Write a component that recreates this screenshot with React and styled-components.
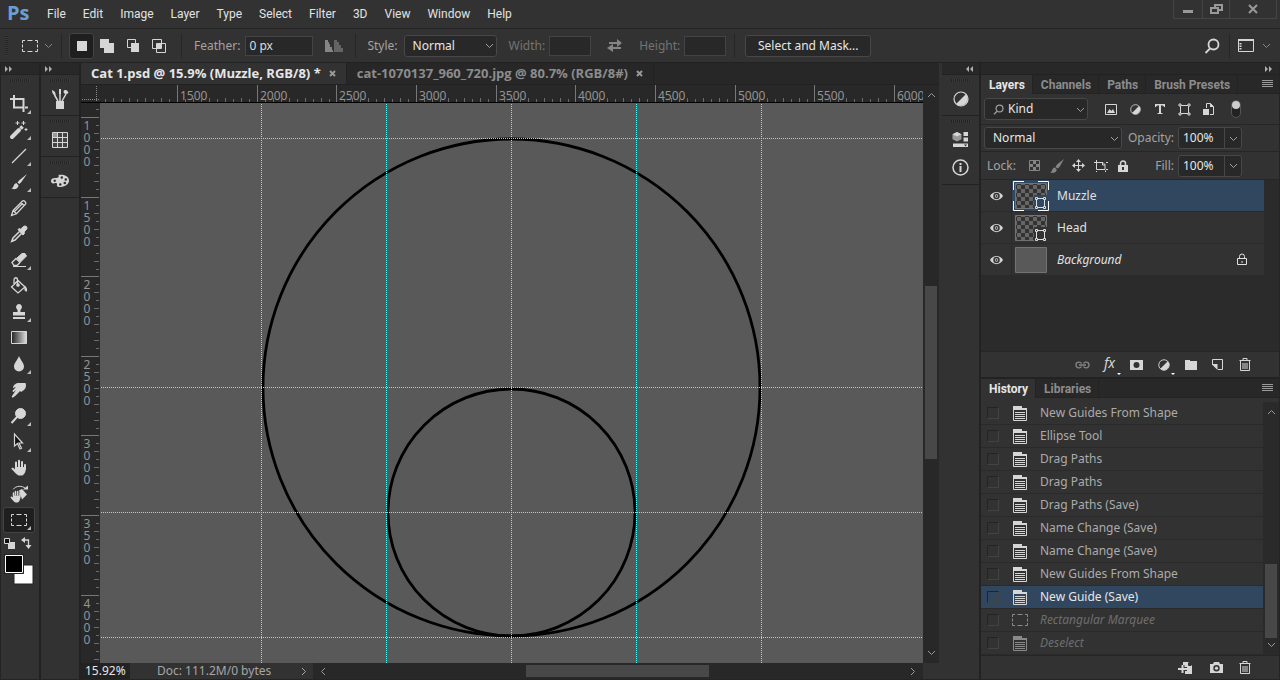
import { Fragment, useLayoutEffect, useRef, useState } from 'react'
import styled, { createGlobalStyle, css } from 'styled-components'

const GlobalStyle = createGlobalStyle`
  * { box-sizing: border-box; }
  body {
    margin: 0;
    background: #222;
    color: #ddd;
    font: 12px/16px "Noto Sans", "Open Sans", sans-serif;
  }
  button, input, select { font: inherit; color: inherit; }
  button { background: none; border: 0; padding: 0; }
  svg { display: block; flex: none; }
  ul { list-style: none; margin: 0; padding: 0; }
`

const panel = '#323232'
const dark = '#282828'
const line = '#242424'
const light = '#d6d6d6'

const Page = styled.div`
  display: flex;
  flex-direction: column;
  height: 100vh;
  min-height: 640px;
  overflow: hidden;
`

/* ---------- menu ---------- */

const MenuBar = styled.header`
  display: flex;
  align-items: flex-start;
  height: 29px;
  flex: none;
  background: ${panel};
  border-bottom: 1px solid ${line};
  padding-left: 7px;
`
const Brand = styled.div`
  width: 40px;
  font: bold 20px/25px "Open Sans", sans-serif;
  color: #6b9fd1;
`
const Menu = styled.nav`
  display: flex;
  gap: 17px;
  flex: 1;
`
const MenuItem = styled.button`
  font: 12px/28px Roboto, "Noto Sans", sans-serif;
  color: #e2e2e2;
`
const WindowButtons = styled.div`
  display: flex;
  height: 19px;
  margin-right: 3px;
  border: 1px solid #444;
  border-top: 0;
`
const WindowButton = styled.button`
  width: ${p => p.$w}px;
  display: flex;
  align-items: center;
  justify-content: center;
  color: #999;
  & + & { border-left: 1px solid #444; }
`

/* ---------- options bar ---------- */

const OptionsBar = styled.div`
  display: flex;
  align-items: center;
  height: 33px;
  flex: none;
  background: ${panel};
  padding: 0 2px 0 5px;
`
const Divider = styled.span`
  width: 1px;
  height: 24px;
  background: #262626;
  margin: 0 ${p => p.$r}px 0 ${p => p.$l}px;
`
const GripV = styled.span`
  width: 3px;
  height: 20px;
  margin-right: 13px;
  background: repeating-linear-gradient(#242424 0 1px, #3a3a3a 1px 2px);
`
const Label = styled.label`
  color: ${p => (p.$off ? '#737373' : '#a3a3a3')};
  margin-right: ${p => p.$gap || 5}px;
  margin-left: ${p => p.$before || 0}px;
  white-space: nowrap;
`
const TextBox = styled.input`
  width: ${p => p.$w}px;
  height: 20px;
  padding: 0 3px;
  background: ${dark};
  border: 1px solid #434343;
  outline: 0;
`
const IconButton = styled.button`
  display: flex;
  align-items: center;
  justify-content: center;
  width: ${p => p.$w || 26}px;
  height: ${p => p.$h || 26}px;
  flex: none;
  color: ${p => (p.$dim ? '#858585' : light)};
  ${p => p.$on && css`
    background: #1f1f1f;
    border: 1px solid #444;
    border-radius: 3px;
  `}
`
const SelectBox = styled.span`
  display: flex;
  align-items: center;
  gap: 4px;
  width: ${p => p.$w}px;
  height: 22px;
  padding: 0 2px 0 8px;
  background: ${dark};
  border: 1px solid #474747;
  border-radius: 3px;
  color: #a0a0a0;
  select {
    appearance: none;
    flex: 1;
    min-width: 0;
    padding: 0;
    background: none;
    border: 0;
    outline: 0;
    color: #e6e6e6;
  }
`
const MaskButton = styled.button`
  width: 126px;
  height: 22px;
  background: ${dark};
  border: 1px solid #474747;
  border-radius: 3px;
  color: #e6e6e6;
`
const Spacer = styled.span`
  flex: 1;
`

/* ---------- workspace ---------- */

const Workspace = styled.div`
  display: flex;
  flex: 1;
  min-height: 0;
  border: 1px solid ${line};
  border-top-color: #222;
`
const Column = styled.aside`
  display: flex;
  flex-direction: column;
  flex: none;
  width: ${p => p.$w}px;
  background: ${panel};
  border-right: ${p => p.$edge || 0}px solid #222;
`
const Collapse = styled.button`
  display: flex;
  align-items: center;
  justify-content: ${p => (p.$right ? 'flex-end' : 'flex-start')};
  height: 12px;
  flex: none;
  padding: 0 6px 0 4px;
  background: ${dark};
  border-bottom: 1px solid #222;
  color: #b0b0b0;
`
const GripH = styled.span`
  display: block;
  width: 20px;
  height: 3px;
  margin: 4px auto 0 9px;
  background: repeating-linear-gradient(90deg, #242424 0 1px, #3a3a3a 1px 2px);
`
const Tools = styled.div`
  display: flex;
  flex-direction: column;
  padding: 9px 3px 0 2px;
`
const Tool = styled.button`
  display: flex;
  align-items: center;
  justify-content: center;
  position: relative;
  width: 32px;
  height: 26px;
  color: ${light};
  border: 1px solid ${p => (p.$on ? '#444' : 'transparent')};
  border-radius: 3px;
  background: ${p => (p.$on ? '#1f1f1f' : 'none')};
  ${p => p.$more && css`
    &::after {
      content: '';
      position: absolute;
      right: 3px;
      bottom: 2px;
      border: 2px solid;
      border-color: transparent #bbb #bbb transparent;
    }
  `}
`
const ToolFoot = styled.div`
  display: flex;
  justify-content: space-between;
  padding: 3px 3px 4px 1px;
`
const PanelGroup = styled.div`
  display: flex;
  flex-direction: column;
  border-bottom: 1px solid #222;
  padding-bottom: ${p => p.$pb || 3}px;
  ${GripH} { margin-bottom: 4px; }
`
const DocArea = styled.main`
  display: flex;
  flex-direction: column;
  flex: 1;
  min-width: 0;
  background: ${dark};
`
const DocTabs = styled.div`
  display: flex;
  height: 22px;
  flex: none;
  background: #272727;
  border-bottom: 1px solid #222;
`
const DocTab = styled.button`
  display: flex;
  align-items: center;
  gap: 8px;
  padding: 0 10px;
  border-right: 1px solid #222;
  font: bold 13px/21px "Open Sans", sans-serif;
  white-space: nowrap;
  color: ${p => (p.$on ? '#e6e6e6' : '#8c8c8c')};
  background: ${p => (p.$on ? panel : 'none')};
  svg { color: #999; }
`
const Sheet = styled.div`
  display: grid;
  grid-template-columns: 19px 1fr 16px;
  grid-template-rows: 18px 1fr;
  flex: 1;
  min-height: 0;
`
const Clip = styled.div`
  overflow: hidden;
  min-width: 0;
  min-height: 0;
  background: ${p => p.$bg || dark};
  border-bottom: ${p => (p.$rule ? '1px solid #000' : '0')};
`
const VScroll = styled.div`
  display: flex;
  flex-direction: column;
  align-items: center;
  grid-column: 3;
  grid-row: 1 / 3;
  padding: 6px 0;
  background: ${dark};
  color: #999;
`
const Thumb = styled.span`
  display: block;
  background: #484848;
  width: ${p => p.$w}px;
  height: ${p => p.$h}px;
`
const VTrack = styled.span`
  flex: 1;
  padding-top: 186px;
`
const HTrack = styled.span`
  flex: 1;
  padding-left: 198px;
`
const Status = styled.footer`
  display: flex;
  align-items: center;
  height: 16px;
  flex: none;
  background: ${panel};
  color: #a6a6a6;
`
const Zoom = styled.input`
  width: 49px;
  height: 16px;
  padding: 0 0 0 4px;
  background: #222;
  border: 0;
  outline: 0;
  color: #e6e6e6;
`
const DocInfo = styled.button`
  display: flex;
  align-items: center;
  justify-content: space-between;
  width: 183px;
  height: 16px;
  padding: 0 5px 0 27px;
  background: ${panel};
  color: #a6a6a6;
`
const HScroll = styled.div`
  display: flex;
  align-items: center;
  flex: 1;
  height: 16px;
  margin-right: 16px;
  padding: 0 6px;
  background: ${dark};
  color: #999;
`

/* ---------- panels ---------- */

const Tabs = styled.div`
  display: flex;
  height: 19px;
  flex: none;
  background: ${dark};
  border-bottom: 1px solid #242424;
  padding-right: 6px;
`
const Tab = styled.button`
  padding: 0 7px 0 8px;
  height: 19px;
  border-right: 1px solid #222;
  font: bold 12px/20px Roboto, "Open Sans", sans-serif;
  color: ${p => (p.$on ? '#e6e6e6' : '#8c8c8c')};
  background: ${p => (p.$on ? panel : 'none')};
`
const PanelMenu = styled.button`
  display: flex;
  align-items: center;
  color: #9a9a9a;
`
const Row = styled.div`
  display: flex;
  align-items: center;
  height: ${p => p.$h || 27}px;
  flex: none;
  padding: 0 37px 0 3px;
  border-bottom: 1px solid #262626;
`
const Combo = styled.span`
  display: flex;
  width: 64px;
  height: 22px;
  background: ${dark};
  border: 1px solid #474747;
  border-radius: 3px;
  input {
    width: 46px;
    padding: 0 0 0 4px;
    background: none;
    border: 0;
    border-right: 1px solid #474747;
    outline: 0;
    color: #e6e6e6;
  }
  button {
    flex: 1;
    display: flex;
    align-items: center;
    justify-content: center;
    color: #a0a0a0;
  }
`
const LayersPanel = styled.section`
  display: flex;
  flex-direction: column;
  flex: 1;
  min-height: 0;
  border-bottom: 2px solid #222;
`
const LayerList = styled.ul`
  flex: 1;
  min-height: 0;
  padding-right: 15px;
  background: #2b2b2b;
`
const Layer = styled.li`
  display: flex;
  height: 32px;
  border-bottom: 1px solid #2a2a2a;
  background: ${panel};
`
const Eye = styled.button`
  display: flex;
  align-items: center;
  justify-content: center;
  width: 31px;
  border-right: 1px solid #2a2a2a;
`
const LayerBody = styled.div`
  display: flex;
  align-items: center;
  flex: 1;
  gap: 8px;
  padding: 0 16px 0 1px;
  background: ${p => (p.$on ? '#30475f' : 'none')};
  color: #e0e0e0;
`
const LayerName = styled.span`
  flex: 1;
  line-height: 18px;
  font-style: ${p => (p.$italic ? 'italic' : 'normal')};
`
const PanelFoot = styled.div`
  display: flex;
  align-items: center;
  justify-content: flex-end;
  height: ${p => p.$h || 26}px;
  flex: none;
  padding-right: 21px;
  border-top: 1px solid #262626;
`
const HistoryPanel = styled.section`
  display: flex;
  flex-direction: column;
  flex: none;
`
const HistoryBody = styled.div`
  display: flex;
  margin-top: 4px;
`
const HistoryList = styled.ul`
  flex: 1;
`
const HistoryItem = styled.li`
  height: 23px;
  border-bottom: 1px solid #2a2a2a;
  background: ${p => (p.$on ? '#30475f' : 'none')};
  label {
    display: flex;
    align-items: center;
    height: 22px;
    padding-left: 6px;
    color: ${p => (p.$on ? '#e6e6e6' : p.$undone ? '#6e6e6e' : '#ababab')};
    font-style: ${p => (p.$undone ? 'italic' : 'normal')};
  }
`
const Check = styled.input`
  appearance: none;
  width: 12px;
  height: 12px;
  margin: 0;
  border: 1px solid;
  border-color: #242424 #434343 #434343 #242424;
`
const StateIcon = styled.span`
  display: flex;
  justify-content: center;
  width: 20px;
  margin: 0 10px 0 11px;
  color: ${p => (p.$undone ? '#8a8a8a' : light)};
`
const ListScroll = styled.div`
  display: flex;
  flex-direction: column;
  align-items: center;
  width: 16px;
  padding: 6px 0;
  background: #2a2a2a;
  color: #999;
  ${Thumb} { margin: auto 0 2px; }
`

/* ---------- icons ---------- */

const Svg = ({ w = 20, h = 20, children, ...rest }) => (
  <svg width={w} height={h} viewBox={`0 0 ${w} ${h}`} fill="none" stroke="currentColor" aria-hidden="true" {...rest}>
    {children}
  </svg>
)
const Fill = props => <Svg fill="currentColor" {...props} stroke="none" />

const Chevron = ({ turn = 0 }) => (
  <Svg w={9} h={9}><path d="M1 3l3.5 3.5L8 3" transform={`rotate(${turn} 4.5 4.5)`} /></Svg>
)
const Arrows = ({ left }) => (
  <Fill w={8} h={6}><path d={left ? 'M4 0v6L1 3zM8 0v6L5 3z' : 'M0 0v6l3-3zM4 0v6l3-3z'} /></Fill>
)
const CloseIcon = () => <Svg w={7} h={7} strokeWidth="2"><path d="M1 1l5 5M6 1L1 6" /></Svg>
const Burger = () => <Svg w={11} h={8}><path d="M0 .5h11M0 2.5h11M0 4.5h11M0 6.5h11" /></Svg>
const Marquee = () => (
  <Svg w={18} h={14}>
    <path d="M1.5 4V1.5H4M6.5 1.5h5M14 1.5h2.500V4M16.500 5.500v3M16.500 10v2.500H14M11.500 12.500h-5M4 12.500H1.500V10M1.500 8.500v-3" />
  </Svg>
)
const Search = ({ s = 16 }) => (
  <Svg w={16} h={16} width={s} height={s} strokeWidth="1.800"><circle cx="9.500" cy="6.500" r="5" /><path d="M6 10.500l-4.500 4.500" /></Svg>
)
const Adjust = ({ s = 16 }) => (
  <Svg w={16} h={16} width={s} height={s}>
    <circle cx="8" cy="8" r="7" strokeWidth="1.200" />
    <path d="M13 3A7.100 7.100 0 0 1 3 13z" fill="currentColor" stroke="none" />
  </Svg>
)
const ShapeBox = () => (
  <Svg w={13} h={13}>
    <path d="M2.500 2.500h8v8h-8z" />
    <path d="M1 1h2v2H1zM10 1h2v2h-2zM1 10h2v2H1zM10 10h2v2h-2z" fill={panel} />
  </Svg>
)
const Trash = () => (
  <Svg w={12} h={13}><path d="M.5 2.500h11M4 2.500v-2h4v2M1.500 3v9.500h9V3M4 5v6M6 5v6M8 5v6" /></Svg>
)
const DocState = () => (
  <Svg w={14} h={15}>
    <path d="M0 0h9v2h5v2H0z" fill="currentColor" stroke="none" />
    <path d="M.5 3v11.500h13V3M2 6.500h10M2 8.500h10M2 10.500h10M2 12.500h10" />
  </Svg>
)

const tools = [
  { name: 'Crop', more: true, icon: <Svg strokeWidth="2"><path d="M5 1v12.500h9M16 13.500h3M1 5h3M6 5h8.500v13" /></Svg> },
  {
    name: 'Magic Wand', more: true,
    icon: (
      <Svg>
        <path d="M3 17l7-7" strokeWidth="4" strokeLinecap="round" /><path d="M11.500 8.500l2-2" strokeWidth="3.500" />
        <path d="M8.500 1v4M6.500 3h4M14.500 1v4M12.500 3h4M17 8v3M15.500 9.500h3" />
      </Svg>
    ),
  },
  { name: 'Line', more: true, icon: <Svg strokeWidth="1.300"><path d="M3 17L17 3" /></Svg> },
  {
    name: 'Brush', more: true,
    icon: <Fill><path d="M18 2L10 8.500 8.500 10.500l1.800 1.600L12 10.500zM7.800 11.200c-2.500-.2-2.800 1.800-3.500 3.500-.6 1-1.500 1.500-2.300 1.600 2.500 1.500 6.500 1.200 7.600-2.600z" /></Fill>
  },
  { name: 'Pencil', icon: <Svg strokeWidth="1.300"><path d="M2.500 17.500l1.500-5L13.500 3c1.500-1 4 1.200 3.200 3L7.500 15.800zM4 12.500l3.500 3.300M12 4.500l3.500 3.500M5.500 13.500l8-8" /></Svg> },
  {
    name: 'Eyedropper',
    icon: (
      <Svg>
        <path d="M10.500 7.500L4 14l-1.300 3.300L6 16l6.500-6.500" strokeWidth="1.500" />
        <path d="M9 5.500l1.500-1 1.500 1C13 3.500 14.500 2 16 2c2 0 2.500 2 1.500 3.500L15 8l.5 1.500-1.500 1.500z" fill="currentColor" />
      </Svg>
    ),
  },
  {
    name: 'Eraser', more: true,
    icon: (
      <Svg>
        <path d="M3 12.500L7 8.500l4 4-3 3H5z" strokeWidth="1.300" />
        <path d="M8 8l5-4.500h3L17.500 6l-6 6z" fill="currentColor" /><path d="M4 16.500h13" />
      </Svg>
    ),
  },
  {
    name: 'Paint Bucket',
    icon: (
      <Svg strokeWidth="1.300">
        <path d="M2.500 11L9 4.500l7 6.500-7 6zM5 9V4c0-3 3.500-3 3.500 0v4" />
        <circle cx="9" cy="9" r="1.200" fill="currentColor" />
        <path d="M15 9.500c2.500 1 3.500 3 3 6-2 .5-3-1.500-2.500-3.500z" fill="currentColor" stroke="none" />
      </Svg>
    ),
  },
  { name: 'Clone Stamp', more: true, icon: <Fill><path d="M10 2a3 3 0 0 1 2 5.200c-.7.800-.7 1.800-.5 2.800H16v3.500H4V10h4.500c.2-1 .2-2-.5-2.800A3 3 0 0 1 10 2zM4 15h12v2H4z" /></Fill> },
  {
    name: 'Gradient',
    icon: (
      <Svg>
        <defs><linearGradient id="ramp"><stop offset="0" stopColor="#222" /><stop offset="1" stopColor="#ddd" /></linearGradient></defs>
        <path d="M2.500 3.500h15v12h-15z" fill="url(#ramp)" />
      </Svg>
    ),
  },
  { name: 'Blur', more: true, icon: <Fill><path d="M10 2c1.500 4 5 7 5 10.500a5 5 0 0 1-10 0C5 9 8.500 6 10 2z" /></Fill> },
  { name: 'Smudge', icon: <Fill><path d="M4 8c0-3 3-5 6-5h6.500c1 2.500.5 5-1.500 7l-3 2-1-1c-2 2-4.500 5-7 6.500-1 .3-1.500-.7-1-1.500l4-6-2.500 2C3.500 12 3.300 11 4 10.200L7 7z" /></Fill> },
  {
    name: 'Dodge', more: true,
    icon: <Svg><circle cx="11.500" cy="7.500" r="5" fill="currentColor" /><path d="M8 11l-5.500 6" strokeWidth="2" /></Svg>
  },
  {
    name: 'Direct Selection', more: true,
    icon: <Svg><path d="M5.500 2v12l3-2.500 2.500 5.500 1.500-.7-2.500-5.300h3.500z" fill="#111" strokeWidth="1.200" /></Svg>
  },
  {
    name: 'Hand',
    icon: (
      <Svg strokeLinecap="round">
        <path d="M7 10V4.500M10 9V2.800M13 10V4M16 11V7" strokeWidth="2" />
        <path d="M6 9h11c0 4-1 7-3.500 8.500h-4C7 16.500 5 13 2.500 11c0-1.800 2-1.500 3.500.5z" fill="currentColor" stroke="none" />
      </Svg>
    ),
  },
  {
    name: 'Rotate View',
    icon: (
      <Svg strokeLinecap="round">
        <path d="M4.500 5C7 1.500 13 1.500 16 4" /><path d="M14 5.500h5V1.500z" fill="currentColor" stroke="none" />
        <path d="M10 6.500l3-1.500 5 5.500-5 5" fill="currentColor" stroke="none" />
        <path d="M4.500 12V9M6.500 11V7.500M8.700 11V7.500M11 12V9" strokeWidth="1.500" />
        <path d="M4 11.500h7.500c0 3-.5 5.500-2.500 7H6.500C4.500 17.500 3.500 16 1.500 13.500c0-1.500 1.500-1.500 2.500 0z" fill="currentColor" stroke="none" />
      </Svg>
    ),
  },
  { name: 'Rectangular Marquee', more: true, on: true, icon: <Marquee /> },
]

/* ---------- rulers ---------- */

const useSize = () => {
  const ref = useRef(null)
  const [size, setSize] = useState([0, 0])
  useLayoutEffect(() => {
    const measure = () => setSize([ref.current.clientWidth, ref.current.clientHeight])
    measure()
    window.addEventListener('resize', measure)
    return () => window.removeEventListener('resize', measure)
  }, [])
  return [ref, size]
}

const minors = [1, 2, 3, 4, 5, 6, 7, 8, 9]

const HRuler = () => {
  const [ref, [width]] = useSize()
  const step = 79.65
  const marks = Array.from({ length: Math.ceil(width / step) + 1 }, (_, i) => i).filter(i => (i - 1) * step + 77 < width)
  return (
    <Clip $rule ref={ref}>
      <svg width={width} height="18" fontSize="12" fill="#949494">
        {marks.map(i => {
          const x = Math.round(77 + (i - 1) * step)
          return (
            <Fragment key={i}>
              <path d={`M${x}.5 0V18`} stroke="#777" />
              {minors.map(n => (
                <path key={n} d={`M${Math.round(x + n * step / 10)}.5 ${n % 2 ? 14 : 13}V18`} stroke="#6b6b6b" />
              ))}
              {x > 0 && <text x={x + 3} y="15">{1000 + i * 500}</text>}
            </Fragment>
          )
        })}
      </svg>
    </Clip>
  )
}

const VRuler = () => {
  const [ref, [, height]] = useSize()
  const step = 79.6
  const marks = Array.from({ length: Math.ceil(height / step) + 1 }, (_, i) => i - 1)
  return (
    <Clip ref={ref}>
      <svg width="19" height={height} fontSize="12" fill="#949494" textAnchor="middle">
        {marks.map(i => {
          const y = Math.round(14 + i * step)
          return (
            <Fragment key={i}>
              <path d={`M0 ${y}.5H18`} stroke="#777" />
              {minors.map(n => (
                <path key={n} d={`M${n % 2 ? 15 : 13} ${Math.round(y + n * step / 10)}.5H18`} stroke="#6b6b6b" />
              ))}
              {y > 0 && y + 50 < height && String(1000 + i * 500).split('').map((d, n) => (
                <text key={n} x="6" y={y + 13 + n * 12}>{d}</text>
              ))}
            </Fragment>
          )
        })}
      </svg>
    </Clip>
  )
}

const Artwork = () => (
  <svg width="3000" height="2000" fill="none">
    <circle cx="411.500" cy="284.500" r="248.500" stroke="#000" strokeWidth="2.800" />
    <circle cx="411.500" cy="409.500" r="123.500" stroke="#000" strokeWidth="2.800" />
    <g stroke="#4ff" strokeDasharray="1 1" shapeRendering="crispEdges">
      {[161, 286, 411, 536, 661].map(x => <path key={x} d={`M${x}.5 1V2000`} />)}
      {[35, 284, 409, 534].map(y => <path key={y} d={`M1 ${y}.5H3000`} />)}
    </g>
  </svg>
)

/* ---------- layer thumbnails ---------- */

const Thumbnail = ({ plain, on }) => (
  <svg width="36" height="30" viewBox="0 0 36 30" fill="none">
    <defs>
      <pattern id="checks" width="8" height="8" patternUnits="userSpaceOnUse">
        <path d="M0 0h8v8H0z" fill="#333" /><path d="M0 0h4v4H0zM4 4h4v4H4z" fill="#666" />
      </pattern>
    </defs>
    <path d="M2.500 2.500h31v25h-31z" fill={plain ? '#595959' : 'url(#checks)'} stroke="#737373" />
    {on && <path d="M.5 9V.5H11M25 .5h10.500V9M35.500 20v9.500H25M11 29.500H.5V20" stroke="#fff" />}
    {!plain && (
      <g>
        <path d="M21 14h13v15H21z" fill={on ? '#30475f' : panel} />
        <path d="M23.500 17.500h8v9h-8z" stroke="#ddd" />
        <path d="M22.500 16.500h2v2h-2zM30.500 16.500h2v2h-2zM22.500 25.500h2v2h-2zM30.500 25.500h2v2h-2z" stroke="#ddd" fill={on ? '#30475f' : panel} />
      </g>
    )}
  </svg>
)

const menus = ['File', 'Edit', 'Image', 'Layer', 'Type', 'Select', 'Filter', '3D', 'View', 'Window', 'Help']

const layers = [
  { name: 'Muzzle', on: true },
  { name: 'Head' },
  { name: 'Background', locked: true },
]

const history = [
  { text: 'New Guides From Shape' },
  { text: 'Ellipse Tool' },
  { text: 'Drag Paths' },
  { text: 'Drag Paths' },
  { text: 'Drag Paths (Save)' },
  { text: 'Name Change (Save)' },
  { text: 'Name Change (Save)' },
  { text: 'New Guides From Shape' },
  { text: 'New Guide (Save)', on: true },
  { text: 'Rectangular Marquee', undone: true, marquee: true },
  { text: 'Deselect', undone: true },
]

const TopBar = () => (
  <MenuBar>
    <Brand>Ps</Brand>
    <Menu>{menus.map(m => <MenuItem key={m}>{m}</MenuItem>)}</Menu>
    <WindowButtons>
      <WindowButton $w={28} aria-label="Minimize"><Fill w={10} h={10}><path d="M0 6h10v3H0z" /></Fill></WindowButton>
      <WindowButton $w={27} aria-label="Restore">
        <Svg w={13} h={11} strokeWidth="2"><path d="M5 4V1h7v5H9M1 4h7v5H1z" /></Svg>
      </WindowButton>
      <WindowButton $w={47} aria-label="Close"><Svg w={10} h={10} strokeWidth="2"><path d="M1 1l8 8M9 1L1 9" /></Svg></WindowButton>
    </WindowButtons>
  </MenuBar>
)

const Options = () => (
  <OptionsBar>
    <GripV />
    <IconButton $w={18} aria-label="Tool preset"><Marquee /></IconButton>
    <IconButton $w={18} $dim aria-label="Presets"><Chevron /></IconButton>
    <Divider $l={4} $r={7} />
    <IconButton $w={25} $on aria-label="New selection"><Fill w={10} h={10}><path d="M0 0h10v10H0z" /></Fill></IconButton>
    <IconButton aria-label="Add to selection"><Fill w={14} h={14}><path d="M0 0h9v4h5v10H4V9H0z" /></Fill></IconButton>
    <IconButton aria-label="Subtract from selection">
      <Svg w={12} h={13}><path d="M4 8.500H.5V.5h8V4" /><path d="M4 4h8v9H4z" fill="currentColor" stroke="none" /></Svg>
    </IconButton>
    <IconButton aria-label="Intersect with selection">
      <Svg w={14} h={14}><path d="M.5.5h9v9h-9zM4.500 4.500h9v9h-9z" /><path d="M5 5h4v4H5z" fill="currentColor" /></Svg>
    </IconButton>
    <Divider $l={9} $r={12} />
    <Label htmlFor="feather">Feather:</Label>
    <TextBox id="feather" $w={68} defaultValue="0 px" />
    <IconButton $w={42} $dim aria-label="Anti-alias">
      <Fill w={18} h={12}><path d="M0 0h3v2h1v2h1v3h2v3h1v2H0z" /><path d="M9 0h3v2h2v3h2v3h2v4H9z" opacity=".6" /></Fill>
    </IconButton>
    <Divider $l={0} $r={11} />
    <Label htmlFor="style" $gap={6}>Style:</Label>
    <SelectBox $w={93}>
      <select id="style"><option>Normal</option></select><Chevron />
    </SelectBox>
    <Label htmlFor="width" $off $gap={4} $before={12}>Width:</Label>
    <TextBox id="width" $w={42} disabled />
    <IconButton $w={48} $dim aria-label="Swap">
      <Fill w={16} h={13}><path d="M2 3h8V0l5 4-5 4V5H2zM14 10H6v3L0 9l6-4v3h8z" /></Fill>
    </IconButton>
    <Label htmlFor="height" $off $gap={4}>Height:</Label>
    <TextBox id="height" $w={42} disabled />
    <Divider $l={8} $r={10} />
    <MaskButton>Select and Mask...</MaskButton>
    <Spacer />
    <IconButton $w={16} aria-label="Search"><Search /></IconButton>
    <Divider $l={9} $r={8} />
    <IconButton $w={16} aria-label="Workspace">
      <Svg w={16} h={13}><path d="M.5.5h15v12H.5z" /><path d="M0 1h16" strokeWidth="2" /><path d="M2.500 4v1.500M2.500 6.500V8M2.500 9v1.500" strokeWidth="2" /></Svg>
    </IconButton>
    <IconButton $w={24} $dim aria-label="Choose workspace"><Chevron /></IconButton>
  </OptionsBar>
)

const ToolColumn = () => (
  <Column $w={40} $edge={2}>
    <Collapse aria-label="Expand tools"><Arrows /></Collapse>
    <GripH />
    <Tools>
      {tools.map(t => (
        <Tool key={t.name} aria-label={t.name} $more={t.more} $on={t.on}>{t.icon}</Tool>
      ))}
      <ToolFoot>
        <IconButton $w={10} $h={14} aria-label="Default colors">
          <Svg w={11} h={11}><path d="M4 4h7v7H4z" fill="currentColor" stroke="none" /><path d="M.5.5h5v5h-5z" fill="#111" /></Svg>
        </IconButton>
        <IconButton $w={12} $h={14} aria-label="Switch colors">
          <Svg w={12} h={12} strokeWidth="1.300"><path d="M2 3h5.500v6" /><path d="M4 0v6L0 3zM4.500 8h6l-3 4z" fill="currentColor" stroke="none" /></Svg>
        </IconButton>
      </ToolFoot>
      <Svg w={31} h={32} stroke="none">
        <path d="M11 11h19v19H11z" fill="#fff" stroke="#222" />
        <path d="M1.500.5h19v19h-19z" fill="#000" stroke="#222" /><path d="M2.500 1.500h17v17h-17z" stroke="#fff" />
      </Svg>
    </Tools>
  </Column>
)

const SideColumn = () => (
  <Column $w={40} $edge={2}>
    <Collapse aria-label="Expand panels"><Arrows /></Collapse>
    <PanelGroup>
      <GripH />
      <IconButton $w={38} aria-label="Brush presets">
        <Svg w={18} h={22}>
          <path d="M5 13h8v8H5z" fill="currentColor" stroke="none" />
          <path d="M7 13L3.500 7M9 13V6M11 13l4-7" strokeWidth="1.500" />
          <path d="M1 2c3 1 4 3 3.500 6C2 7 1 5 1 2zM8 1h2v5H8zM12.500 4c0-2.500 3-2.500 4-1l1 2c-1.500 1-4 2-5-1z" fill="currentColor" stroke="none" />
        </Svg>
      </IconButton>
    </PanelGroup>
    <PanelGroup>
      <GripH />
      <IconButton $w={38} aria-label="Swatches">
        <Svg w={16} h={16}><path d="M.5.5h15v15H.5z" fill="#444" /><path d="M1 1h5v4H1z" fill="#999" stroke="none" /><path d="M5.500 0v16M10.500 0v16M0 5.500h16M0 10.500h16" /></Svg>
      </IconButton>
    </PanelGroup>
    <PanelGroup>
      <GripH />
      <IconButton $w={38} aria-label="Color">
        <Fill w={20} h={14}>
          <path fillRule="evenodd" d="M8.500 1C15 0 19 3 19 6.500c0 4-4.500 6.500-9.500 6.500-2.500 0-3-1-2.500-2.200.5-1.500-1-2-2.500-1.500C2.500 10 1 9 1 7c0-2 2-3.300 4.500-3C8 4.300 9.500 3 8.500 1zM10.500 3.500a1.300 1.300 0 1 0 2.600 0 1.300 1.300 0 1 0-2.600 0zM14.500 5.500a1.300 1.300 0 1 0 2.600 0 1.300 1.300 0 1 0-2.600 0zM13.500 9a1.300 1.300 0 1 0 2.600 0 1.300 1.300 0 1 0-2.600 0zM9 10.500a1.300 1.300 0 1 0 2.600 0 1.300 1.300 0 1 0-2.600 0zM3.500 6.700a1.200 1.200 0 1 0 2.400 0 1.200 1.200 0 1 0-2.400 0z" />
        </Fill>
      </IconButton>
    </PanelGroup>
  </Column>
)

const Document = () => (
  <DocArea>
    <DocTabs>
      <DocTab $on>Cat 1.psd @ 15.9% (Muzzle, RGB/8) * <CloseIcon /></DocTab>
      <DocTab>cat-1070137_960_720.jpg @ 80.7% (RGB/8#) <CloseIcon /></DocTab>
    </DocTabs>
    <Sheet>
      <Clip $rule>
        <svg width="19" height="18" stroke="#888" strokeDasharray="1 1"><path d="M1 14.500h18M15.500 1v17" /></svg>
      </Clip>
      <HRuler />
      <VScroll>
        <Chevron turn={180} /><VTrack><Thumb $w={12} $h={173} /></VTrack><Chevron />
      </VScroll>
      <VRuler />
      <Clip $bg="#595959"><Artwork /></Clip>
    </Sheet>
    <Status>
      <Zoom aria-label="Zoom level" defaultValue="15.92%" />
      <DocInfo>Doc: 111.2M/0 bytes <Chevron turn={-90} /></DocInfo>
      <HScroll>
        <Chevron turn={90} /><HTrack><Thumb $w={183} $h={12} /></HTrack><Chevron turn={-90} />
      </HScroll>
    </Status>
  </DocArea>
)

const IconStrip = () => (
  <Column $w={39} $edge={2}>
    <Collapse $right aria-label="Expand panels"><Arrows left /></Collapse>
    <PanelGroup>
      <GripH />
      <IconButton $w={37} aria-label="Adjustments"><Adjust /></IconButton>
    </PanelGroup>
    <PanelGroup $pb={1}>
      <GripH />
      <IconButton $w={37} $h={24} aria-label="Properties">
        <Fill w={17} h={17}>
          <path d="M5 1l4.500 2.200v5L5 10.500.5 8.200v-5z" fill="#999" /><path d="M5 1l4.500 2.200L5 5.500.5 3.200z" />
          <path d="M11.500 1H16v4h-4.500zM11.500 6.500H16v4h-4.500zM1 12.500h15V16H1z" /><path d="M12 13.500h3l-1.500 2z" fill={panel} />
        </Fill>
      </IconButton>
      <IconButton $w={37} $h={32} aria-label="Info">
        <Svg w={17} h={17} strokeWidth="1.500"><circle cx="8.500" cy="8.500" r="7.500" /><path d="M8.500 7v6M8.500 4v2" strokeWidth="2" /></Svg>
      </IconButton>
    </PanelGroup>
  </Column>
)

const Layers = () => (
  <LayersPanel>
    <Tabs>
      <Tab $on>Layers</Tab><Tab>Channels</Tab><Tab>Paths</Tab><Tab>Brush Presets</Tab>
      <Spacer /><PanelMenu aria-label="Panel menu"><Burger /></PanelMenu>
    </Tabs>
    <Row $h={31}>
      <SelectBox $w={104}>
        <Search s={11} />
        <select aria-label="Filter kind"><option>Kind</option></select><Chevron />
      </SelectBox>
      <IconButton $w={46} aria-label="Pixel layers">
        <Svg w={12} h={11}><path d="M.5.5h11v10H.5z" /><path d="M2 9l2.500-4 2 2L8 5l2 4z" fill="currentColor" stroke="none" /></Svg>
      </IconButton>
      <IconButton $w={3} aria-label="Adjustment layers"><Adjust s={11} /></IconButton>
      <IconButton $w={46} aria-label="Type layers"><Fill w={10} h={10}><path d="M0 0h10v3H9L8 1.500H6V9h1.500v1h-5V9H4V1.500H2L1 3H0z" /></Fill></IconButton>
      <IconButton $w={2} aria-label="Shape layers"><ShapeBox /></IconButton>
      <IconButton $w={46} aria-label="Smart objects">
        <Svg w={11} h={12}><path d="M3.500 5V.5h4l3 3v8H7" /><path d="M7 0v4h4M0 6h6v6H0z" fill="currentColor" stroke="none" /></Svg>
      </IconButton>
      <IconButton $w={10} aria-label="Toggle filter">
        <Svg w={10} h={20}><rect x=".5" y="1.500" width="9" height="17" rx="4.500" fill="#222" stroke="#555" /><circle cx="5" cy="6" r="4" fill="#ccc" stroke="none" /></Svg>
      </IconButton>
    </Row>
    <Row>
      <SelectBox $w={138}>
        <select aria-label="Blend mode"><option>Normal</option></select><Chevron />
      </SelectBox>
      <Spacer />
      <Label htmlFor="opacity" $gap={4}>Opacity:</Label>
      <Combo><input id="opacity" defaultValue="100%" /><button aria-label="Opacity slider"><Chevron /></button></Combo>
    </Row>
    <Row $h={28}>
      <Label as="span" $gap={8} $before={3}>Lock:</Label>
      <IconButton $w={22} $dim aria-label="Lock transparency">
        <Svg w={11} h={11}><path d="M.5.5h10v10H.5z" /><path d="M4 1h3v3H4zM1 4h3v3H1zM7 4h3v3H7zM4 7h3v3H4z" fill="currentColor" stroke="none" /></Svg>
      </IconButton>
      <IconButton $w={22} $dim aria-label="Lock pixels">
        <Fill w={14} h={14}><path d="M14 0L7 5.500 5.500 8l2 1.500L9.500 8zM5 8.500c-2 0-2.500 1.500-3 3-.5 1-1 1.500-2 1.700 2.500 1.300 6 .8 6.800-2.500z" /></Fill>
      </IconButton>
      <IconButton $w={22} aria-label="Lock position">
        <Svg w={13} h={13}><path d="M6.500 1v11M1 6.500h11" /><path d="M6.500 0L9 3H4zM6.500 13L4 10h5zM0 6.500L3 4v5zM13 6.500L10 9V4z" fill="currentColor" stroke="none" /></Svg>
      </IconButton>
      <IconButton $w={22} aria-label="Lock artboard">
        <Svg w={14} h={12}><path d="M0 2.500h2M3 2.500h6l2 2v5H2.500V0M12 9.500h2M11.500 10.500V12M12 2.500h2M2.500 11v1M8.500 2v3H11" /></Svg>
      </IconButton>
      <IconButton $w={22} aria-label="Lock all">
        <Svg w={10} h={12}><path d="M2.500 5V3.500a2.500 2.500 0 0 1 5 0V5" strokeWidth="1.500" /><path fillRule="evenodd" d="M0 5h10v7H0zM4 7v3h2V7z" fill="currentColor" stroke="none" /></Svg>
      </IconButton>
      <Spacer />
      <Label htmlFor="fill" $gap={4}>Fill:</Label>
      <Combo><input id="fill" defaultValue="100%" /><button aria-label="Fill slider"><Chevron /></button></Combo>
    </Row>
    <LayerList>
      {layers.map(l => (
        <Layer key={l.name}>
          <Eye aria-label={`Toggle ${l.name}`}>
            <Svg w={13} h={10}>
              <path d="M0 5c3-5.500 10-5.500 13 0-3 5.500-10 5.500-13 0z" fill={light} stroke="none" />
              <circle cx="6.500" cy="5" r="2.500" fill={light} stroke={panel} strokeWidth="1.500" /><circle cx="6.500" cy="5" r="1" fill={panel} stroke="none" />
            </Svg>
          </Eye>
          <LayerBody $on={l.on}>
            <Thumbnail plain={l.locked} on={l.on} />
            <LayerName $italic={l.locked}>{l.name}</LayerName>
            {l.locked && <Svg w={12} h={13}><path d="M3.500 5.500V3.500a2.500 2.500 0 0 1 5 0v2M1.500 5.500h9v6h-9zM6 8v2" /></Svg>}
          </LayerBody>
        </Layer>
      ))}
    </LayerList>
    <PanelFoot>
      <IconButton $w={27} $dim aria-label="Link layers">
        <Svg w={15} h={8} strokeWidth="1.300"><path d="M6.500 2.500C5.500.5 1 .5 1 4s4.500 3.500 5.500 1.500M8.500 2.500C9.500.5 14 .5 14 4s-4.500 3.500-5.500 1.500M4 4h7" /></Svg>
      </IconButton>
      <FxButton aria-label="Layer style">fx</FxButton>
      <IconButton $w={27} aria-label="Add mask">
        <Fill w={13} h={10}><path fillRule="evenodd" d="M0 0h13v10H0zM6.500 2a3 3 0 1 0 0 6 3 3 0 0 0 0-6z" /></Fill>
      </IconButton>
      <MoreButton aria-label="New adjustment layer"><Adjust s={12} /></MoreButton>
      <IconButton $w={27} aria-label="New group"><Fill w={12} h={10}><path d="M0 0h5v1h7v1H0zM0 2h12v8H0z" /></Fill></IconButton>
      <IconButton $w={27} aria-label="New layer">
        <Svg w={11} h={11}><path d="M.5 5V.500h10v10H6" /><path d="M0 5h5.500v6L0 5.500z" fill="currentColor" stroke="none" /></Svg>
      </IconButton>
      <IconButton $w={27} aria-label="Delete layer"><Trash /></IconButton>
    </PanelFoot>
  </LayersPanel>
)

const MoreButton = styled(IconButton).attrs({ $w: 27 })`
  position: relative;
  &::after {
    content: '';
    position: absolute;
    right: 2px;
    bottom: 3px;
    border: 2px solid transparent;
    border-top-color: #fff;
    border-bottom: 0;
  }
`
const FxButton = styled(MoreButton)`
  font: italic 14px/16px "Noto Sans", sans-serif;
  padding-bottom: 3px;
`

const History = () => (
  <HistoryPanel>
    <Tabs>
      <Tab $on>History</Tab><Tab>Libraries</Tab>
      <Spacer /><PanelMenu aria-label="Panel menu"><Burger /></PanelMenu>
    </Tabs>
    <HistoryBody>
      <HistoryList>
        {history.map((h, i) => (
          <HistoryItem key={i} $on={h.on} $undone={h.undone}>
            <label>
              <Check type="checkbox" />
              <StateIcon $undone={h.undone}>{h.marquee ? <Marquee /> : <DocState />}</StateIcon>
              {h.text}
            </label>
          </HistoryItem>
        ))}
      </HistoryList>
      <ListScroll><Chevron turn={180} /><Thumb $w={12} $h={74} /><Chevron /></ListScroll>
    </HistoryBody>
    <PanelFoot $h={24}>
      <IconButton $w={32} $h={22} aria-label="New document from state">
        <Svg w={14} h={12}><path d="M5 0h6v3h3v9H7V9H5z" fill="currentColor" stroke="none" /><path d="M4.500 3v8M0 7h9" stroke={panel} strokeWidth="4" /><path d="M4.500 3v8M0 7h9" strokeWidth="2" /><path d="M10.500.5v3h3" stroke={panel} /></Svg>
      </IconButton>
      <IconButton $w={30} $h={22} aria-label="New snapshot">
        <Fill w={13} h={11}><path fillRule="evenodd" d="M0 2h3l1-2h5l1 2h3v9H0zM6.500 3a3.200 3.200 0 1 0 0 6.400 3.200 3.200 0 0 0 0-6.400z" /><circle cx="6.500" cy="6.200" r="1.600" /></Fill>
      </IconButton>
      <IconButton $w={27} $h={22} aria-label="Delete state"><Trash /></IconButton>
    </PanelFoot>
  </HistoryPanel>
)

const App = () => (
  <Page>
    <GlobalStyle />
    <TopBar />
    <Options />
    <Workspace>
      <ToolColumn />
      <SideColumn />
      <Document />
      <Column as="div" $w={3} />
      <IconStrip />
      <Column as="div" $w={298}>
        <Collapse $right aria-label="Collapse panels"><Arrows /></Collapse>
        <Layers />
        <History />
      </Column>
    </Workspace>
  </Page>
)

export default App
